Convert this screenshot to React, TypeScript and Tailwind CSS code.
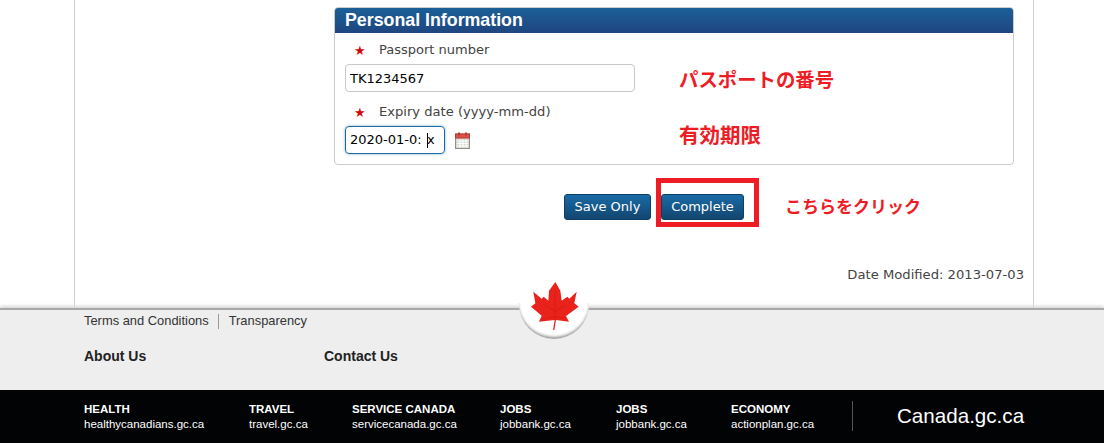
const sites = [
  { title: "HEALTH", url: "healthycanadians.gc.ca", width: "w-[165px]" },
  { title: "TRAVEL", url: "travel.gc.ca", width: "w-[103px]" },
  { title: "SERVICE CANADA", url: "servicecanada.gc.ca", width: "w-[148px]" },
  { title: "JOBS", url: "jobbank.gc.ca", width: "w-[116px]" },
  { title: "JOBS", url: "jobbank.gc.ca", width: "w-[115px]" },
  { title: "ECONOMY", url: "actionplan.gc.ca", width: "w-[121px]" },
];

const MapleLeaf = () => (
  <svg width="50" height="50" viewBox="150 33 150 150" className="block">
    <path
      d="M226 36 L241 62 L245 92 L262 80 L268 86 L290 65 L283 100 L296 110 L258 138 L267 155 L228 150 L223 180 L219 180 L224 150 L177 155 L185 137 L153 110 L166 100 L160 65 L185 86 L191 80 L205 92 L207 62 Z"
      fill="#e9231b"
    />
    <path d="M225 60 L225 150 M225 125 L195 105 M225 125 L258 105 M225 140 L195 145 M225 140 L252 145" stroke="#cf1a13" strokeWidth="2" fill="none" />
  </svg>
);

const CalendarIcon = () => (
  <svg width="15" height="17" viewBox="0 0 15 17" className="block">
    <rect x="0.5" y="2" width="14" height="14.5" fill="#d9d9d0" stroke="#8f8f86" />
    <rect x="0.5" y="2" width="14" height="4" fill="#d9534f" stroke="#c0392b" />
    <rect x="3" y="0.5" width="2" height="3" fill="#c0392b" />
    <rect x="10" y="0.5" width="2" height="3" fill="#c0392b" />
    <path d="M2 9h11M2 11.5h11M2 14h11M5 7.5v8M8 7.5v8M11 7.5v8" stroke="#fff" strokeWidth="1" />
  </svg>
);

const RedStar = () => <span className="w-[34px] pl-[9px] text-[13px] leading-none text-[#d3080c]">★</span>;

const Note = ({ className, children }: { className: string; children: string }) => (
  <span
    className={`absolute whitespace-nowrap font-bold leading-none text-[#ee1c25] ${className}`}
    style={{ fontFamily: '"Noto Sans CJK JP", sans-serif' }}
  >
    {children}
  </span>
);

const blueButton =
  "h-[26px] rounded-[3px] border border-[#0d3f66] bg-gradient-to-b from-[#1a6ba6] to-[#12466f] text-[13px] text-white";

export default function App() {
  return (
    <div className="relative h-[443px] w-[1104px] overflow-hidden bg-white font-['DejaVu_Sans',sans-serif] text-[#333]">
      <main className="ml-[74px] h-[308px] w-[960px] border-x border-[#cfcfcf] pl-[259px] pt-[7px]">
        <section className="h-[158px] w-[680px] overflow-hidden rounded-[4px] border border-[#cccccc]">
          <h2 className="h-[26px] -mx-px -mt-px bg-gradient-to-b from-[#1a6198] to-[#1f4580] pl-[11px] font-['Liberation_Sans',sans-serif] text-[17.8px] font-bold leading-[26px] text-white">
            Personal Information
          </h2>
          <div className="px-[10px] pt-[9px]">
            <label className="flex h-[16px] items-center text-[13px] text-[#444]">
              <RedStar />
              Passport number
            </label>
            <input
              readOnly
              value="TK1234567"
              className="mt-[6px] block h-[28px] w-[290px] rounded-[4px] border border-[#c8c8c8] px-[4px] text-[13px] text-black outline-none"
            />
            <label className="mt-[12px] flex h-[16px] items-center text-[13.1px] text-[#444]">
              <RedStar />
              Expiry date (yyyy-mm-dd)
            </label>
            <div className="mt-[6px] flex items-center">
              <div className="relative h-[28px] w-[100px] overflow-hidden rounded-[4px] border border-[#1c6aa3] pl-[4px] text-[13px] leading-[26px] text-black shadow-[0_0_3px_#7fb2d9]">
                2020-01-0:
                <span className="absolute left-[81px] top-[6px] h-[15px] w-px bg-black" />
                <span className="absolute left-[81px] top-0">x</span>
              </div>
              <span className="ml-[10px] mt-px">
                <CalendarIcon />
              </span>
            </div>
          </div>
        </section>
        <div className="mt-[29px] flex w-[680px] gap-[10px] pl-[230px]">
          <button className={`${blueButton} w-[87px]`}>Save Only</button>
          <button className={`${blueButton} w-[83px]`}>Complete</button>
        </div>
        <p className="mt-[47px] w-[690px] text-right text-[13.15px] leading-[16px] text-[#444]">Date Modified: 2013-07-03</p>
      </main>

      <footer className="relative font-['Liberation_Sans',sans-serif]">
        <div className="h-[82px] border-t-2 border-[#a8a8a8] bg-[#eeeeee] pl-[84px] pt-[3px] text-[#333] shadow-[0_-2px_3px_#d8d8d8]">
          <div className="flex h-[16px] items-center text-[12.9px]">
            <a>Terms and Conditions</a>
            <span className="ml-[9px] mr-[10px] h-[15px] w-px bg-[#999]" />
            <a>Transparency</a>
          </div>
          <div className="mt-[19px] flex text-[14px] font-bold leading-[16px] text-[#222]">
            <span className="w-[240px]">About Us</span>
            <span>Contact Us</span>
          </div>
        </div>
        <div className="relative flex h-[53px] items-center bg-[#010305] pl-[84px] text-white">
          {sites.map((site, i) => (
            <div key={i} className={`${site.width} text-[11.5px] leading-[15px]`}>
              <div className="font-bold">{site.title}</div>
              <div>{site.url}</div>
            </div>
          ))}
          <span className="mt-[-1px] h-[30px] w-px bg-[#555]" />
          <span className="ml-[44px] text-[20.6px]">Canada.gc.ca</span>
        </div>
      </footer>

      {/* maple leaf notch sits over the footer edge */}
      <div className="absolute left-[519px] top-[303px] h-[36px] w-[70px] rounded-b-[35px] bg-white shadow-[inset_0_-3px_3px_-1px_#999]" />
      <div className="absolute left-[530px] top-[281px]">
        <MapleLeaf />
      </div>

      {/* annotations added on top of the screenshot */}
      <Note className="left-[679px] top-[69px] text-[19.4px]">パスポートの番号</Note>
      <Note className="left-[679px] top-[124px] text-[20.5px]">有効期限</Note>
      <Note className="left-[785px] top-[197px] text-[17px]">こちらをクリック</Note>
      <div className="absolute left-[656px] top-[178px] h-[49px] w-[103px] border-[5px] border-[#ee1c25]" />
    </div>
  );
}
